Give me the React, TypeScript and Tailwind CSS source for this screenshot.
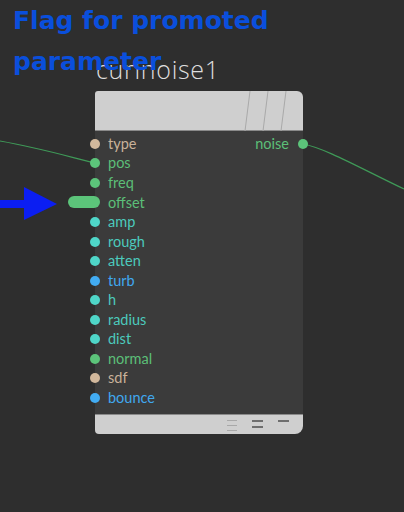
import React from 'react'

type Port = { name: string; color: string; text: string }

const inputs: Port[] = [
  { name: 'type', color: 'bg-[#d2b89c]', text: 'text-[#c9b29a]' },
  { name: 'pos', color: 'bg-[#5cc47a]', text: 'text-[#5cbf78]' },
  { name: 'freq', color: 'bg-[#5cc47a]', text: 'text-[#5cbf78]' },
  { name: 'offset', color: 'bg-[#5cc47a]', text: 'text-[#5cbf78]' },
  { name: 'amp', color: 'bg-[#4fd6c8]', text: 'text-[#4ccabd]' },
  { name: 'rough', color: 'bg-[#4fd6c8]', text: 'text-[#4ccabd]' },
  { name: 'atten', color: 'bg-[#4fd6c8]', text: 'text-[#4ccabd]' },
  { name: 'turb', color: 'bg-[#42acf2]', text: 'text-[#40a8ef]' },
  { name: 'h', color: 'bg-[#4fd6c8]', text: 'text-[#4ccabd]' },
  { name: 'radius', color: 'bg-[#4fd6c8]', text: 'text-[#4ccabd]' },
  { name: 'dist', color: 'bg-[#4fd6c8]', text: 'text-[#4ccabd]' },
  { name: 'normal', color: 'bg-[#5cc47a]', text: 'text-[#5cbf78]' },
  { name: 'sdf', color: 'bg-[#d2b89c]', text: 'text-[#c9b29a]' },
  { name: 'bounce', color: 'bg-[#42acf2]', text: 'text-[#40a8ef]' },
]

function Wires() {
  return (
    <svg className="absolute inset-0 pointer-events-none" width="404" height="512">
      <path d="M0 141 C 40 148, 70 157, 95 163" stroke="#3f9a58" strokeWidth="1.2" fill="none" />
      <path d="M303 144 C 325 148, 360 168, 404 189" stroke="#3f9a58" strokeWidth="1.2" fill="none" />
    </svg>
  )
}

function Callout() {
  return (
    <>
      <div
        className="absolute left-[13px] top-[0px] text-[25px] leading-[41px] font-bold text-[#0a4fdc] z-20"
        style={{ fontFamily: '"DejaVu Sans", sans-serif' }}
      >
        Flag for promoted
        <br />
        parameter
      </div>
      <svg className="absolute left-0 top-[186px] z-20" width="60" height="36">
        <rect x="0" y="14" width="27" height="8" fill="#0b1ef2" />
        <polygon points="24,1 57,18 24,34" fill="#0b1ef2" />
      </svg>
    </>
  )
}

export default function App() {
  return (
    <div
      className="relative w-[404px] h-[512px] overflow-hidden bg-[#2e2e2e]"
      style={{ fontFamily: 'Lato, "Noto Sans", sans-serif' }}
    >
      <Wires />
      <Callout />
      <div className="relative z-10 flex flex-col pl-[95px] pt-[51px]">
        <div
          className="pl-[1px] h-[40px] text-[25px] font-light tracking-[0.7px] text-[#dedede] leading-[36px]"
          style={{ fontFamily: '"Open Sans", sans-serif' }}
        >
          curlnoise1
        </div>
        <div className="w-[208px] flex flex-col">
          <div className="relative h-[40px] bg-[#cfcfcf] rounded-tr-[6px] rounded-tl-[3px] border-b border-[#8a8a8a]">
            <svg className="absolute right-[12px] top-0" width="50" height="40">
              <line x1="9" y1="0" x2="4" y2="40" stroke="#a9a9a9" strokeWidth="1" />
              <line x1="27" y1="0" x2="22" y2="40" stroke="#a9a9a9" strokeWidth="1" />
              <line x1="45" y1="0" x2="40" y2="40" stroke="#a9a9a9" strokeWidth="1" />
            </svg>
          </div>
          <div className="bg-[#3b3b3b] pt-[3px] pb-[6px] flex flex-col">
            {inputs.map((p, i) => (
              <div key={p.name} className="h-[19.55px] flex items-center justify-between text-[14.5px]">
                <div className="flex items-center gap-[8px]">
                  {p.name === 'offset' ? (
                    <div className="relative w-[10px] h-[10px] -ml-[5px]">
                      <div className={`absolute right-0 top-[-1px] w-[32px] h-[12px] rounded-full ${p.color}`} />
                    </div>
                  ) : (
                    <div className={`w-[10px] h-[10px] rounded-full -ml-[5px] ${p.color}`} />
                  )}
                  <span className={p.text}>{p.name}</span>
                </div>
                {i === 0 && (
                  <div className="flex items-center gap-[9px]">
                    <span className="text-[#5cbf78]">noise</span>
                    <div className="w-[10px] h-[10px] rounded-full -mr-[5px] bg-[#5cc47a]" />
                  </div>
                )}
              </div>
            ))}
          </div>
          <div className="relative h-[20px] bg-[#cfcfcf] rounded-bl-[4px] rounded-br-[8px] border-t border-[#8a8a8a]">
            <div className="absolute left-[132px] top-[5px] flex flex-col gap-[4px]">
              <div className="w-[10px] h-[1px] bg-[#a8a8a8]" />
              <div className="w-[10px] h-[1px] bg-[#a8a8a8]" />
              <div className="w-[10px] h-[1px] bg-[#a8a8a8]" />
            </div>
            <div className="absolute left-[157px] top-[5px] flex flex-col gap-[4px]">
              <div className="w-[11px] h-[2px] bg-[#6e6e6e]" />
              <div className="w-[11px] h-[2px] bg-[#6e6e6e]" />
            </div>
            <div className="absolute left-[183px] top-[5px]">
              <div className="w-[11px] h-[2px] bg-[#6e6e6e]" />
            </div>
          </div>
        </div>
      </div>
    </div>
  )
}
